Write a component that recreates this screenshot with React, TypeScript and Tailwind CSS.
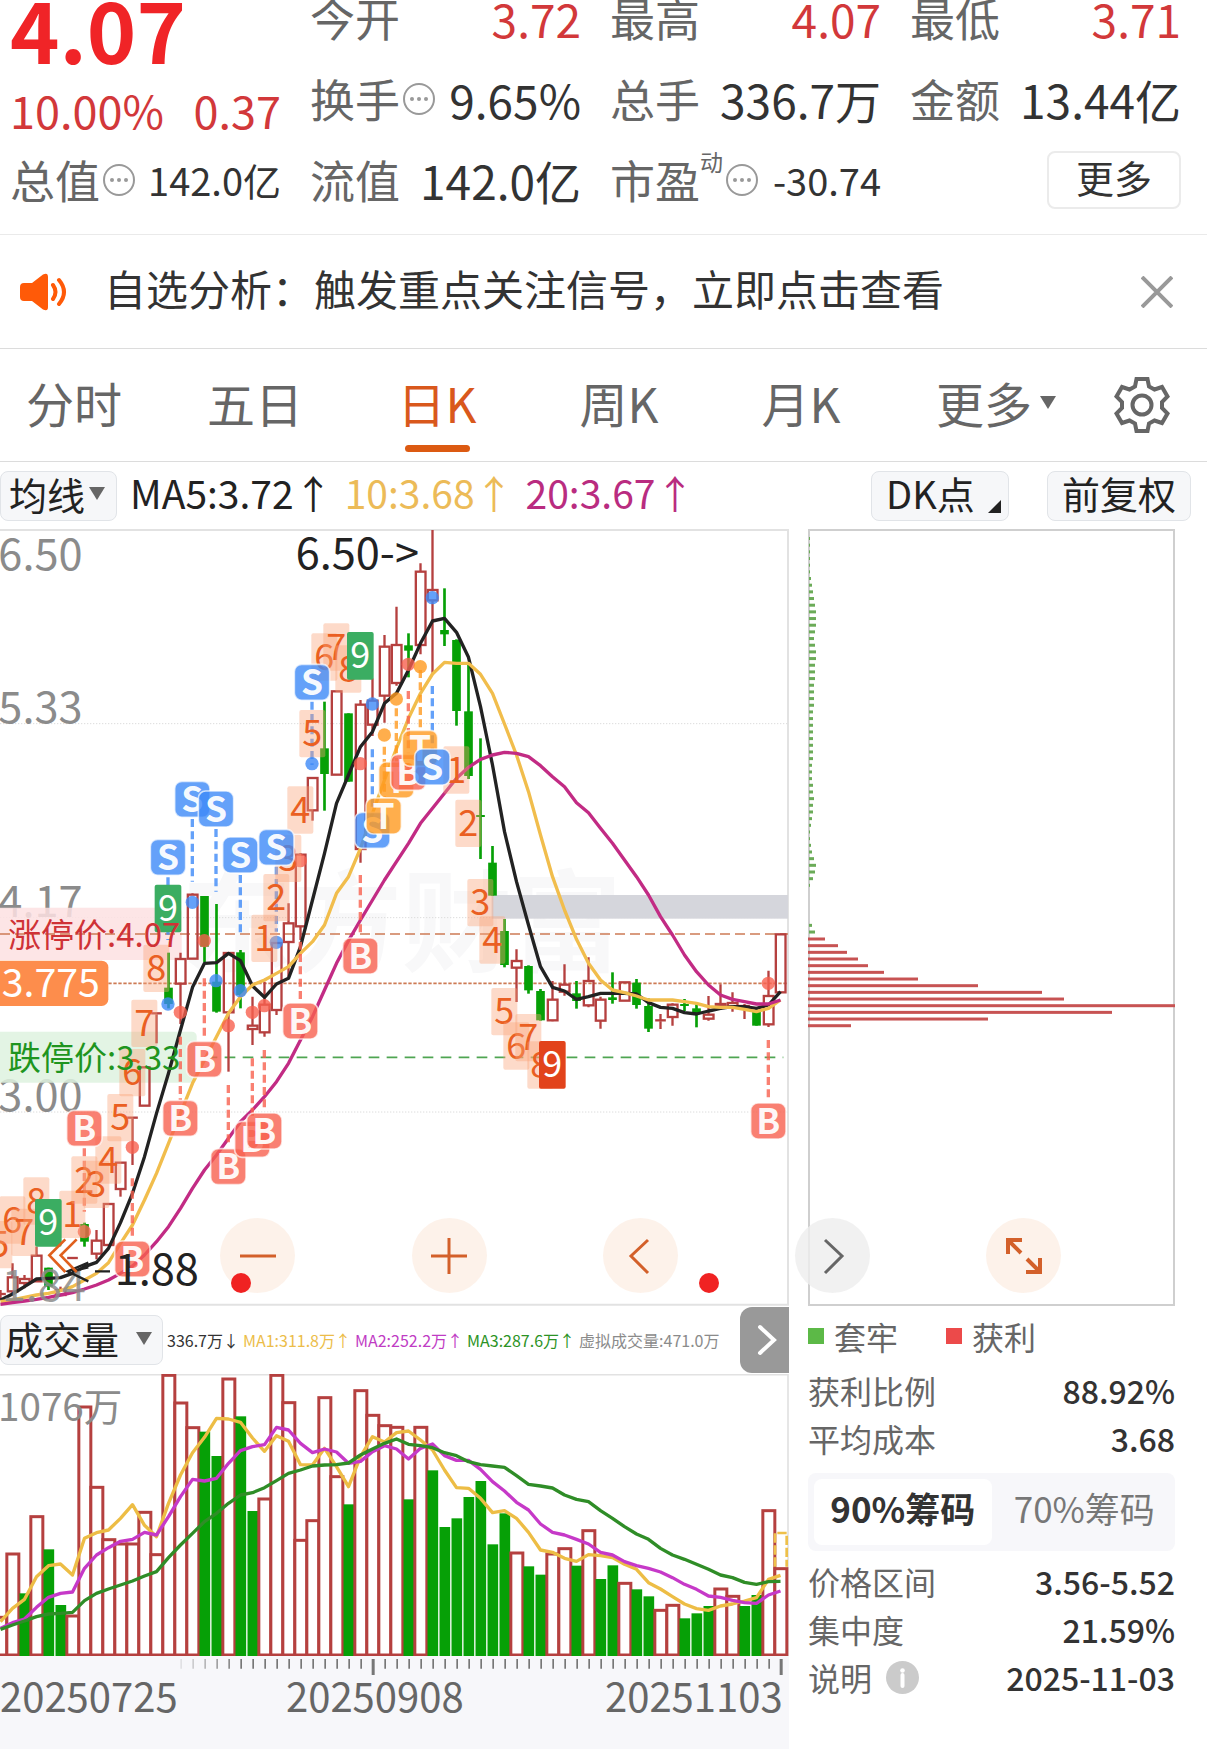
import type { ReactNode } from 'react';

/* ---------- Chart data. One price unit is a third of a pixel; candles are 36 units apart. ---------- */

const candleX = (i: number) => 1.5 + 36 * i;

// [colour, high, bodyTop, bodyBottom, low]
type Candle = ['r' | 'g', number, number, number, number];
const CANDLES: Candle[] = [
  ['r', 2310, 2322, 2325, 2340],
  ['r', 2230, 2270, 2315, 2320],
  ['r', 2265, 2275, 2290, 2305],
  ['r', 2180, 2205, 2285, 2285],
  ['g', 2243, 2243, 2300, 2310],
  ['r', 2300, 2308, 2326, 2326],
  ['r', 2214, 2214, 2217, 2217],
  ['g', 2108, 2112, 2165, 2180],
  ['r', 2130, 2160, 2202, 2218],
  ['r', 2050, 2050, 2176, 2176],
  ['r', 1926, 1926, 2008, 2030],
  ['r', 1793, 1793, 1796, 1935],
  ['r', 1640, 1640, 1758, 1758],
  ['r', 1480, 1480, 1483, 1570],
  ['g', 1298, 1403, 1452, 1465],
  ['r', 1298, 1315, 1392, 1512],
  ['r', 1120, 1122, 1317, 1317],
  ['g', 1128, 1128, 1280, 1326],
  ['g', 1152, 1385, 1475, 1478],
  ['r', 1297, 1297, 1478, 1655],
  ['g', 1290, 1297, 1425, 1465],
  ['r', 1430, 1515, 1528, 1575],
  ['r', 1385, 1452, 1538, 1550],
  ['r', 1267, 1267, 1471, 1485],
  ['r', 1150, 1208, 1267, 1370],
  ['r', 1000, 1002, 1220, 1260],
  ['r', 772, 772, 872, 902],
  ['g', 545, 685, 762, 872],
  ['r', 512, 512, 765, 765],
  ['g', 580, 580, 785, 785],
  ['r', 540, 552, 988, 1028],
  ['r', 475, 540, 615, 648],
  ['r', 345, 378, 528, 608],
  ['r', 260, 373, 490, 497],
  ['g', 340, 376, 392, 472],
  ['r', 130, 153, 376, 403],
  ['r', 30, 208, 242, 458],
  ['g', 205, 330, 343, 378],
  ['g', 358, 360, 573, 617],
  ['g', 430, 574, 768, 777],
  ['g', 655, 885, 889, 1017],
  ['g', 978, 1028, 1127, 1127],
  ['g', 1197, 1233, 1335, 1342],
  ['r', 1288, 1321, 1344, 1446],
  ['g', 1336, 1338, 1411, 1421],
  ['g', 1407, 1413, 1501, 1502],
  ['r', 1383, 1437, 1502, 1504],
  ['r', 1333, 1392, 1416, 1427],
  ['g', 1383, 1420, 1443, 1466],
  ['r', 1312, 1381, 1457, 1462],
  ['r', 1430, 1437, 1503, 1526],
  ['g', 1357, 1432, 1440, 1451],
  ['r', 1385, 1385, 1443, 1443],
  ['g', 1377, 1388, 1455, 1466],
  ['g', 1435, 1458, 1526, 1536],
  ['r', 1482, 1501, 1504, 1527],
  ['r', 1450, 1452, 1492, 1517],
  ['g', 1437, 1452, 1456, 1473],
  ['g', 1453, 1465, 1481, 1522],
  ['r', 1428, 1482, 1497, 1502],
  ['r', 1393, 1450, 1460, 1470],
  ['r', 1417, 1447, 1460, 1475],
  ['r', 1452, 1458, 1462, 1497],
  ['g', 1465, 1475, 1517, 1517],
  ['r', 1352, 1426, 1514, 1521],
  ['r', 1241, 1241, 1418, 1418],
];

const MA5 = [
  2340, 2322, 2300, 2277, 2275, 2273, 2260, 2240, 2227, 2185, 2108, 2020, 1910, 1780, 1660, 1530, 1402, 1330, 1328,
  1300, 1322, 1398, 1432, 1392, 1375, 1280, 1140, 1000, 850, 765, 680, 635, 550, 520, 450, 370, 303, 295, 337, 412,
  560, 735, 935, 1085, 1215, 1340, 1402, 1413, 1438, 1430, 1420, 1420, 1420, 1422, 1448, 1462, 1465, 1478, 1482, 1473,
  1465, 1460, 1460, 1465, 1455, 1415,
];
const MA10 = [
  2345, 2340, 2332, 2325, 2320, 2312, 2300, 2280, 2260, 2228, 2170, 2115, 2040, 1960, 1870, 1780, 1690, 1620, 1550,
  1480, 1430, 1395, 1380, 1360, 1340, 1300, 1265, 1215, 1120, 1070, 985, 880, 780, 685, 595, 520, 462, 427, 430, 430,
  463, 520, 612, 705, 815, 945, 1070, 1170, 1258, 1330, 1380, 1410, 1418, 1428, 1440, 1440, 1440, 1445, 1450, 1460,
  1462, 1462, 1468, 1475, 1465, 1440,
];
const MA20 = [
  2353, 2348, 2343, 2338, 2332, 2325, 2318, 2307, 2295, 2280, 2260, 2238, 2205, 2165, 2120, 2065, 2005, 1950, 1905,
  1855, 1805, 1770, 1730, 1685, 1630, 1560, 1490, 1410, 1330, 1262, 1200, 1140, 1080, 1025, 970, 910, 865, 820, 775,
  742, 718, 705, 697, 700, 710, 737, 770, 800, 848, 878, 925, 970, 1020, 1070, 1125, 1190, 1245, 1305, 1355, 1395,
  1425, 1438, 1445, 1452, 1452, 1440,
];

// Volume bars: colour and top edge.
const VOLUMES: ['r' | 'g', number][] = [
  ['r', 950], ['r', 760], ['g', 880], ['r', 648], ['g', 748], ['g', 915], ['r', 946], ['r', 319], ['r', 560],
  ['r', 717], ['r', 730], ['r', 730], ['r', 635], ['r', 762], ['r', 224], ['r', 307], ['r', 381], ['g', 395],
  ['g', 468], ['r', 235], ['g', 349], ['g', 633], ['r', 595], ['r', 224], ['r', 306], ['r', 719], ['r', 660],
  ['r', 291], ['r', 528], ['g', 613], ['r', 270], ['r', 344], ['r', 375], ['r', 380], ['g', 598], ['r', 380],
  ['g', 511], ['g', 681], ['g', 655], ['g', 591], ['g', 543], ['g', 733], ['g', 640], ['r', 757], ['g', 799],
  ['g', 824], ['r', 760], ['r', 744], ['g', 797], ['r', 690], ['g', 837], ['g', 796], ['r', 848], ['g', 868],
  ['g', 889], ['r', 929], ['r', 914], ['g', 955], ['g', 940], ['g', 918], ['r', 865], ['r', 887], ['g', 918],
  ['g', 885], ['r', 630], ['r', 804],
];
const VOL_MA1 = [
  965, 925, 898, 830, 797, 792, 825, 715, 698, 690, 655, 614, 676, 710, 610, 525, 458, 412, 355, 357, 367, 414, 454,
  407, 424, 494, 495, 445, 500, 560, 470, 410, 426, 398, 393, 420, 450, 510, 563, 565, 595, 638, 632, 655, 697, 750,
  757, 775, 784, 764, 767, 773, 793, 808, 848, 867, 890, 912, 926, 931, 918, 912, 903, 893, 838, 826,
];
const VOL_MA2 = [
  985, 968, 957, 922, 892, 880, 876, 805, 765, 743, 724, 718, 697, 705, 650, 590, 538, 543, 535, 490, 452, 440, 434,
  382, 390, 430, 458, 447, 456, 490, 484, 455, 437, 447, 477, 445, 432, 467, 481, 481, 508, 545, 573, 607, 630, 672,
  697, 705, 718, 732, 757, 765, 785, 797, 805, 816, 833, 853, 868, 888, 892, 901, 908, 910, 885, 873,
];
const VOL_MA3 = [
  988, 975, 963, 950, 942, 940, 937, 902, 880, 867, 855, 843, 828, 815, 773, 735, 700, 665, 640, 610, 585, 578, 563,
  542, 520, 510, 498, 495, 494, 489, 465, 447, 430, 417, 433, 437, 443, 458, 467, 485, 494, 498, 502, 527, 553, 558,
  564, 585, 598, 605, 632, 655, 680, 702, 718, 745, 765, 778, 793, 808, 825, 833, 847, 853, 845, 844,
];

// Chip distribution: bar lengths from the top price down.
const CHIPS_LOCKED = [
  1, 1, 1, 1, 1, 1, 2, 3, 4, 5, 6, 7, 7, 7, 6, 5, 6, 7, 7, 6, 6, 6, 5, 5, 5, 5, 4, 4, 4, 4, 4, 4, 4, 4, 3, 3, 3, 4,
  4, 5, 4, 4, 3, 2, 1, 1, 2, 3, 5, 7, 6, 4, 1, 0, 0, 0, 0, 0, 3, 6,
];
const CHIPS_PROFIT = [17, 30, 39, 50, 60, 76, 110, 170, 234, 256, 367, 304, 180, 43];

const RED = '#b5403f';
const GREEN = '#06a006';

const line = (ys: number[]) => ys.map((y, i) => `${candleX(i)},${y}`).join(' ');

/* ---------- Markers on the price chart ---------- */

type Mark = [string, number, number];
const COUNTS: Mark[] = [
  ['5', -2, 2174], ['6', 37, 2100], ['7', 73, 2137], ['8', 109, 2043], ['1', 217, 2083], ['2', 253, 1980],
  ['3', 289, 1993], ['4', 325, 1920], ['5', 361, 1793], ['6', 397, 1658], ['7', 433, 1510], ['8', 469, 1345],
  ['1', 793, 1255], ['2', 829, 1133], ['3', 865, 1015], ['4', 901, 870], ['5', 937, 641], ['6', 973, 411],
  ['7', 1009, 381], ['8', 1045, 447], ['1', 1369, 750], ['2', 1405, 910], ['3', 1441, 1148], ['4', 1477, 1260],
  ['5', 1513, 1475], ['6', 1549, 1578], ['7', 1585, 1553], ['8', 1621, 1635],
];
const NINES: [string, number, number][] = [
  ['#3bad62', 145, 2108],
  ['#3bad62', 504, 1165],
  ['#3bad62', 1081, 407],
  ['#e2431b', 1657, 1634],
];
const TAGS: Mark[] = [
  ['S', 504, 1012], ['S', 577, 838], ['S', 648, 867], ['S', 721, 1005], ['S', 829, 982], ['S', 936, 487],
  ['S', 1117, 931], ['T', 1189, 780], ['T', 1151, 888], ['B', 1225, 757], ['T', 1260, 685], ['S', 1297, 741],
  ['B', 253, 1825], ['B', 397, 2217], ['B', 541, 1795], ['B', 613, 1618], ['B', 685, 1940], ['B', 757, 1858],
  ['B', 793, 1833], ['B', 901, 1503], ['B', 1081, 1308], ['B', 2305, 1803],
];
const TAG_FILL: Record<string, string> = { S: '#3d8af7', B: '#f8604f', T: '#ff9a1f' };
const DOTS: Mark[] = [
  ['S', 504, 1452], ['S', 577, 1147], ['S', 648, 1382], ['S', 721, 1412], ['S', 829, 1267], ['S', 936, 731],
  ['S', 1117, 552], ['S', 1297, 233], ['B', 541, 1477], ['B', 613, 1262], ['B', 685, 1517], ['B', 757, 1477],
  ['B', 793, 1457], ['B', 901, 1022], ['B', 1081, 731], ['B', 397, 1882], ['B', 253, 2135], ['B', 2305, 1390],
  ['B', 1225, 433], ['T', 1153, 645], ['T', 1189, 537], ['T', 1261, 440],
];
// [kind, x, from, to]
const STEMS: [string, number, number, number][] = [
  ['S', 504, 1072, 1260], ['S', 577, 897, 1085], ['S', 648, 927, 1115], ['S', 721, 1065, 1250],
  ['S', 829, 1040, 1235], ['S', 936, 545, 735], ['S', 1117, 688, 870], ['S', 1297, 498, 690],
  ['B', 613, 1375, 1560], ['B', 541, 1550, 1740], ['B', 901, 1265, 1445], ['B', 1081, 1065, 1250],
  ['B', 685, 1695, 1880], ['B', 757, 1615, 1795], ['B', 793, 1590, 1775], ['B', 253, 1885, 2075],
  ['B', 397, 1975, 2160], ['B', 2305, 1560, 1745], ['B', 1225, 513, 700], ['T', 1153, 680, 830],
  ['T', 1189, 565, 725], ['T', 1261, 450, 625],
];

function PriceChart() {
  return (
    <svg viewBox="0 27 2367 2331" className="block h-auto w-full" role="img" aria-label="日K线图">
      <text x="545" y="1330" fontSize="330" fontWeight="700" fill="#f8f8f9">东方财富</text>
      <path d="M0 30H2364V2354H0" fill="none" stroke="#e2e2e2" strokeWidth="6" />
      {[611, 1193, 1776].map((y) => (
        <line key={y} x1="0" x2="2364" y1={y} y2={y} stroke="#dcdcdc" strokeWidth="3" strokeDasharray="4 5" />
      ))}
      <rect x="1475" y="1125" width="889" height="71" fill="#d5d6dc" />

      <g fill="#8b8b8b" fontSize="130">
        <text x="-5" y="150">6.50</text>
        <text x="-5" y="608">5.33</text>
        <text x="-5" y="1190">4.17</text>
        <text x="-5" y="1772">3.00</text>
      </g>

      <rect x="-20" y="1163" width="565" height="157" rx="14" fill="#fde1e2" fillOpacity=".85" />
      <rect x="-20" y="1535" width="610" height="153" rx="14" fill="#def2df" fillOpacity=".85" />
      <line x1="0" x2="2364" y1="1242" y2="1242" stroke="#cd7b55" strokeWidth="5" strokeDasharray="30 15" />
      <line x1="325" x2="2364" y1="1390" y2="1390" stroke="#cd7b55" strokeWidth="5" strokeDasharray="10 5" />
      <line x1="620" x2="2350" y1="1612" y2="1612" stroke="#4fa552" strokeWidth="5" strokeDasharray="32 22" />

      {CANDLES.map(([c, high, top, bottom, low], i) => {
        const x = candleX(i);
        const flat = bottom - top < 8;
        return c === 'g' ? (
          <g key={i} fill={GREEN}>
            <rect x={x - 4} y={high} width="8" height={low - high} />
            <rect x={x - 13} y={top} width="26" height={Math.max(bottom - top, 6)} />
          </g>
        ) : (
          <g key={i} stroke={RED} strokeWidth="7" fill="none">
            <path d={`M${x} ${high}V${top}M${x} ${bottom}V${low}`} />
            {flat ? <path d={`M${x - 16} ${top}H${x + 16}`} /> : <rect x={x - 14} y={top + 2} width="29" height={bottom - top - 3} />}
          </g>
        );
      })}

      <g fill="none" strokeWidth="10" strokeLinejoin="round">
        <polyline points={line(MA5)} stroke="#222" />
        <polyline points={line(MA10)} stroke="#f1bd4c" />
        <polyline points={line(MA20)} stroke="#c22b84" />
      </g>
      <text x="5" y="2343" fontSize="130" fill="#8b8b8b" fillOpacity=".85">1.84</text>

      {STEMS.map(([k, x, a, b]) => (
        <line key={`${k}${x}`} x1={x} x2={x} y1={a} y2={b} stroke={TAG_FILL[k]} strokeOpacity=".8" strokeWidth="10" strokeDasharray="24 13" />
      ))}
      {DOTS.map(([k, x, y]) => (
        <circle key={`${x}-${y}`} cx={x} cy={y} r="20" fill={TAG_FILL[k]} fillOpacity=".8" />
      ))}

      {COUNTS.map(([t, x, y]) => (
        <g key={`${x}-${y}`}>
          <rect x={x - 39} y={y - 71} width="78" height="142" rx="6" fill="#f9a278" fillOpacity=".4" />
          <text x={x} y={y + 38} fontSize="108" textAnchor="middle" fill="#ea5f22">{t}</text>
        </g>
      ))}
      {NINES.map(([fill, x, y]) => (
        <g key={`${x}-${y}`}>
          <rect x={x - 40} y={y - 71} width="80" height="143" rx="6" fill={fill} />
          <text x={x} y={y + 38} fontSize="108" textAnchor="middle" fill="#fff">9</text>
        </g>
      ))}

      {TAGS.map(([t, x, y]) => (
        <g key={`${x}-${y}`}>
          <rect x={x - 53} y={y - 54} width="106" height="108" rx="22" fill={TAG_FILL[t]} fillOpacity=".8" stroke="#fff" strokeOpacity=".7" strokeWidth="5" />
          <text x={x} y={y + 38} fontSize="106" fontWeight="700" textAnchor="middle" fill="#fff" fillOpacity=".95">{t}</text>
        </g>
      ))}

      <text x="24" y="1282" fontSize="99" fill="#cf3236">涨停价:4.07</text>
      <text x="24" y="1650" fontSize="99" fill="#1f951f">跌停价:3.33</text>
      <rect x="-20" y="1322" width="345" height="136" rx="20" fill="#fd8d4c" />
      <text x="5" y="1432" fontSize="118" fill="#fff">3.775</text>

      <text x="887" y="147" fontSize="130" fill="#222">6.50-&gt;</text>
      <text x="344" y="2295" fontSize="130" fill="#222">1.88</text>
      <path d="M285 2254H330M265 2228L203 2254L265 2284M215 2254L265 2242" fill="none" stroke="#222" strokeWidth="7" />
      <path d="M196 2158L148 2206L196 2256M230 2158L182 2206L230 2256" fill="none" stroke="#e0601d" strokeWidth="8" />

      <circle cx="2127" cy="2289" r="30" fill="#f02222" />
    </svg>
  );
}

function ChipChart() {
  return (
    <svg viewBox="0 0 367 777" className="block h-auto w-full" role="img" aria-label="筹码分布">
      <rect x="1" y="1" width="365" height="775" fill="none" stroke="#cfcfcf" strokeWidth="2" />
      {CHIPS_LOCKED.map((w, i) => (
        <rect key={i} x="1" y={8 + i * 6.67} width={w} height="3" fill="#6bab58" />
      ))}
      {CHIPS_PROFIT.map((w, i) => (
        <rect key={i} x="0" y={408.5 + i * 6.67} width={w} height="3" fill="#c75353" />
      ))}
    </svg>
  );
}

function VolumeChart() {
  return (
    <svg viewBox="0 222 2367 846" className="block h-auto w-full" role="img" aria-label="成交量图">
      <path d="M0 224H2364V1068" fill="none" stroke="#e2e2e2" strokeWidth="5" />
      {VOLUMES.map(([c, top], i) => {
        const x = candleX(i);
        return c === 'g' ? (
          <rect key={i} x={x - 15} y={top} width="32" height={1068 - top} fill={GREEN} />
        ) : (
          <rect key={i} x={x - 17} y={top + 2} width="36" height={1063 - top} fill="#fff" stroke={RED} strokeWidth="9" />
        );
      })}
      <path d="M2325 800V699H2360V800" fill="none" stroke="#eec04a" strokeWidth="8" strokeDasharray="28 8" />
      <g fill="none" strokeWidth="10" strokeLinejoin="round">
        <polyline points={line(VOL_MA1)} stroke="#edbd45" />
        <polyline points={line(VOL_MA2)} stroke="#c639c8" />
        <polyline points={line(VOL_MA3)} stroke="#2f8d27" />
      </g>
      <text x="-6" y="362" fontSize="116" fill="#8b8b8b">1076万</text>
    </svg>
  );
}

function AxisTicks() {
  return (
    <svg viewBox="0 0 2367 57" className="block h-auto w-full" aria-hidden="true">
      {Array.from({ length: 51 }, (_, k) => k + 15).map((i) => {
        const major = i === 31 || i === 65;
        return (
          <line
            key={i}
            x1={candleX(i) + 2}
            x2={candleX(i) + 2}
            y1="9"
            y2={major ? 57 : 38}
            stroke="#777"
            strokeWidth={major ? 9 : 5}
            strokeOpacity={i < 20 ? (i - 14) / 6 : 1}
          />
        );
      })}
    </svg>
  );
}

/* ---------- Small pieces ---------- */

function Dots() {
  return (
    <svg viewBox="0 0 34 34" className="ml-0.5 h-[34px] w-[34px] shrink-0" fill="none" stroke="#999" strokeWidth="2">
      <circle cx="17" cy="17" r="15" />
      <g fill="#999" stroke="none">
        <circle cx="10" cy="17" r="2" />
        <circle cx="17" cy="17" r="2" />
        <circle cx="24" cy="17" r="2" />
      </g>
    </svg>
  );
}

function Quote({ label, value, red, dots }: { label: string; value: string; red?: boolean; dots?: boolean }) {
  return (
    <div className="flex h-9 items-center justify-between whitespace-nowrap">
      <span className="flex items-center text-[45px] leading-9 text-[#666]">
        {label}
        {dots && <Dots />}
      </span>
      <span className={red ? 'text-[46px] leading-9 text-[#d2383a]' : 'text-[46px] leading-9 text-[#333]'}>{value}</span>
    </div>
  );
}

function Triangle() {
  return (
    <svg viewBox="0 0 16 13" className="h-[13px] w-4" fill="#666" aria-hidden="true">
      <path d="M0 0H16L8 13Z" />
    </svg>
  );
}

function Tab({ children, active, className = '' }: { children: ReactNode; active?: boolean; className?: string }) {
  return (
    <button
      type="button"
      aria-pressed={!!active}
      className={`relative flex h-full items-center justify-center gap-2 pb-1.5 ${active ? 'text-[#d9581c]' : 'text-[#666]'} ${className}`}
    >
      {children}
      {active && <span className="absolute bottom-[9px] h-[7px] w-[65px] rounded-full bg-[#dc5a12]" />}
    </button>
  );
}

function Round({ label, gray, badge, children }: { label: string; gray?: boolean; badge?: boolean; children: ReactNode }) {
  return (
    <button
      type="button"
      aria-label={label}
      className={`relative flex h-[75px] w-[75px] items-center justify-center rounded-full ${gray ? 'bg-[#eeeeee]/80' : 'bg-[#fdf1e8]/90'}`}
    >
      <svg viewBox="0 0 40 40" className="h-10 w-10" fill="none" stroke={gray ? '#666' : '#d3602a'} strokeWidth="3">
        {children}
      </svg>
      {badge && <span className="absolute bottom-0 left-[11px] h-5 w-5 rounded-full bg-[#f02222]" />}
    </button>
  );
}

function Stat({ label, value, info }: { label: string; value: string; info?: boolean }) {
  return (
    <div className="flex h-12 items-center justify-between text-[32px] leading-10">
      <span className="flex items-center gap-3.5 text-[#666]">
        {label}
        {info && (
          <svg viewBox="0 0 33 33" className="h-[33px] w-[33px]" aria-hidden="true">
            <circle cx="16.5" cy="16.5" r="16.5" fill="#cbcbcb" />
            <circle cx="16.5" cy="9.5" r="2.3" fill="#fff" />
            <path d="M16.5 14V25" stroke="#fff" strokeWidth="4" strokeLinecap="round" />
          </svg>
        )}
      </span>
      <span className="font-medium text-[#333]">{value}</span>
    </div>
  );
}

export default function App() {
  return (
    <main className="w-full overflow-hidden bg-white font-['Noto_Sans_CJK_SC',sans-serif]">
      <header className="grid grid-cols-4 gap-x-[29px] border-b border-[#eaeaea] pb-9 pl-2.5 pr-[26px]">
        <div className="whitespace-nowrap">
          <div className="text-[84px] font-bold leading-[56px] text-[#f02427]">4.07</div>
          <div className="mt-9 flex justify-between text-[45px] leading-9 text-[#d2383a]">
            <span>10.00%</span>
            <span>0.37</span>
          </div>
          <div className="mt-[34px] flex h-9 items-center justify-between">
            <span className="flex items-center text-[45px] leading-9 text-[#666]">
              总值
              <Dots />
            </span>
            <span className="text-[38px] leading-9 text-[#333]">142.0亿</span>
          </div>
        </div>
        <div className="flex flex-col gap-[45px]">
          <Quote label="今开" value="3.72" red />
          <Quote label="换手" value="9.65%" dots />
          <Quote label="流值" value="142.0亿" />
        </div>
        <div className="flex flex-col gap-[45px]">
          <Quote label="最高" value="4.07" red />
          <Quote label="总手" value="336.7万" />
          <div className="flex h-9 items-center justify-between whitespace-nowrap">
            <span className="flex items-center text-[45px] leading-9 text-[#666]">
              市盈
              <sup className="top-0 -mt-3 self-start text-[23px] leading-none">动</sup>
              <Dots />
            </span>
            <span className="text-[38px] leading-9 text-[#333]">-30.74</span>
          </div>
        </div>
        <div className="flex flex-col gap-[45px]">
          <Quote label="最低" value="3.71" red />
          <Quote label="金额" value="13.44亿" />
          <div className="flex h-9 items-center justify-end">
            <button type="button" className="h-[58px] w-[134px] shrink-0 rounded-lg border-2 border-[#ebebeb] pb-1.5 text-[38px] leading-9 text-[#333]">
              更多
            </button>
          </div>
        </div>
      </header>

      <section className="flex h-[114px] items-center border-b border-[#dcdcdc] pl-5 pr-[34px]">
        <svg viewBox="0 0 48 38" className="h-[38px] w-12 shrink-0" aria-hidden="true">
          <path d="M4 10H12L23 1.500Q28 -1 28 4V34Q28 39 23 36.500L12 28H4Q0 28 0 24V14Q0 10 4 10Z" fill="#ff5a08" />
          <path d="M33 12Q38 19 33 26M39 7Q49 19 39 31" fill="none" stroke="#ff5a08" strokeWidth="4" strokeLinecap="round" />
        </svg>
        <p className="ml-9 flex-1 whitespace-nowrap pb-2 text-[42px] leading-[48px] text-[#333]">自选分析：触发重点关注信号，立即点击查看</p>
        <button type="button" aria-label="关闭">
          <svg viewBox="0 0 32 32" className="h-8 w-8" stroke="#999" strokeWidth="4" aria-hidden="true">
            <path d="M1 1L31 31M31 1L1 31" />
          </svg>
        </button>
      </section>

      <nav className="grid h-[113px] grid-cols-[164fr_182fr_182fr_182fr_182fr_192fr_123fr] border-b border-[#dcdcdc] text-[48px] leading-[56px]">
        <Tab className="pr-4">分时</Tab>
        <Tab>五日</Tab>
        <Tab active>日K</Tab>
        <Tab>周K</Tab>
        <Tab>月K</Tab>
        <Tab className="pl-4">
          更多
          <Triangle />
        </Tab>
        <button type="button" aria-label="设置" className="flex items-center pl-[30px]">
          <svg viewBox="0 0 56 56" className="h-14 w-14" fill="none" stroke="#666" strokeWidth="4" aria-hidden="true">
            <path d="M22.500 2H33.500L35 9.500L40.500 12.500L48 10L53.500 19.500L48 25V31L53.500 36.500L48 46L40.500 43.500L35 46.500L33.500 54H22.500L21 46.500L15.500 43.500L8 46L2.500 36.500L8 31V25L2.500 19.500L8 10L15.500 12.500L21 9.500Z" />
            <circle cx="28" cy="28" r="9.500" />
          </svg>
        </button>
      </nav>

      <section className="flex h-[67px] items-center whitespace-nowrap text-[38px] leading-10 text-[#222]">
        <button type="button" className="flex h-[50px] w-[117px] items-center gap-1 rounded-lg border border-[#e1e4e8] bg-[#f6f7f9] pb-1 pl-2">
          均线
          <Triangle />
        </button>
        <p className="ml-[13px] flex flex-1 gap-3 pb-2 text-[39px]">
          <span>MA5:3.72↑</span>
          <span className="text-[#ecbb58]">10:3.68↑</span>
          <span className="text-[#b92c80]">20:3.67↑</span>
        </p>
        <button type="button" className="relative h-[50px] w-[138px] rounded-lg border border-[#e1e4e8] bg-[#f6f7f9] pb-1.5 pl-3.5 text-left">
          DK点
          <svg viewBox="0 0 13 13" className="absolute bottom-[7px] right-[7px] h-[13px] w-[13px]" fill="#222" aria-hidden="true">
            <path d="M13 0V13H0Z" />
          </svg>
        </button>
        <button type="button" className="ml-[38px] mr-4 h-[50px] w-36 rounded-lg border border-[#e1e4e8] bg-[#f6f7f9] pb-1.5">前复权</button>
      </section>

      <section className="relative grid grid-cols-[789fr_418fr]">
        <PriceChart />
        <div className="pl-[19px] pr-8">
          <ChipChart />
        </div>
        <div className="absolute inset-x-0 bottom-[13px] flex justify-between pl-[220px] pr-[146px]">
          <Round label="缩小" badge><path d="M2 20H38" /></Round>
          <Round label="放大"><path d="M2 20H38M20 2V38" /></Round>
          <Round label="向左"><path d="M27 4L10 20L27 37" /></Round>
          <Round label="向右" gray><path d="M13 4L30 20L13 37" /></Round>
          <Round label="全屏">
            <path d="M18 4H4V18M4 4L17 17M22 36H36V22M36 36L23 23" strokeWidth="4" />
          </Round>
        </div>
      </section>

      <section className="grid grid-cols-[789fr_418fr]">
        <div className="flex min-w-0 flex-col">
          <div className="flex h-[68px] items-center whitespace-nowrap">
            <button type="button" className="flex h-[50px] w-[163px] shrink-0 items-center justify-between rounded-lg border border-[#e1e4e8] bg-[#f6f7f9] pb-1 pl-1 pr-2.5 text-[38px] leading-10 text-[#222]">
              成交量
              <Triangle />
            </button>
            <p className="ml-1 flex min-w-0 flex-1 gap-1 text-[16px] leading-7 text-[#333]">
              <span>336.7万↓</span>
              <span className="text-[#ecbd49]">MA1:311.8万↑</span>
              <span className="text-[#bf3cc4]">MA2:252.2万↑</span>
              <span className="text-[#2c9325]">MA3:287.6万↑</span>
              <span className="text-[#8b8b8b]">虚拟成交量:471.0万</span>
            </p>
            <button type="button" aria-label="更多指标" className="flex h-[66px] w-[49px] shrink-0 items-center justify-center rounded-l-xl bg-[#999]">
              <svg viewBox="0 0 20 32" className="ml-1 h-8 w-5" fill="none" stroke="#fff" strokeWidth="4" strokeLinecap="round" aria-hidden="true">
                <path d="M3 3L17 16L3 29" />
              </svg>
            </button>
          </div>
          <VolumeChart />
          <div className="flex-1 bg-[#f7f7fa]">
            <AxisTicks />
            <div className="grid grid-cols-[286fr_319fr_184fr] pb-[34px] text-[40px] leading-10 text-[#666]">
              <span>20250725</span>
              <span>20250908</span>
              <span>20251103</span>
            </div>
          </div>
        </div>

        <div className="min-w-0 pl-[19px] pr-8">
          <div className="flex h-[60px] items-center gap-12 text-[32px] leading-10 text-[#666]">
            <span className="flex items-center gap-2.5"><i className="h-4 w-4 bg-[#5cb947]" />套牢</span>
            <span className="flex items-center gap-2.5"><i className="h-4 w-4 bg-[#ec4a4a]" />获利</span>
          </div>
          <Stat label="获利比例" value="88.92%" />
          <Stat label="平均成本" value="3.68" />
          <div className="mb-1.5 mt-[11px] grid grid-cols-2 rounded-lg bg-[#f7f7fa] p-1.5 text-[35px] leading-[58px]">
            <button type="button" aria-pressed="true" className="rounded-lg bg-white pb-2 font-bold text-[#333]">90%筹码</button>
            <button type="button" aria-pressed="false" className="pb-2 pl-2 text-[#777]">70%筹码</button>
          </div>
          <Stat label="价格区间" value="3.56-5.52" />
          <Stat label="集中度" value="21.59%" />
          <Stat label="说明" value="2025-11-03" info />
        </div>
      </section>
    </main>
  );
}
